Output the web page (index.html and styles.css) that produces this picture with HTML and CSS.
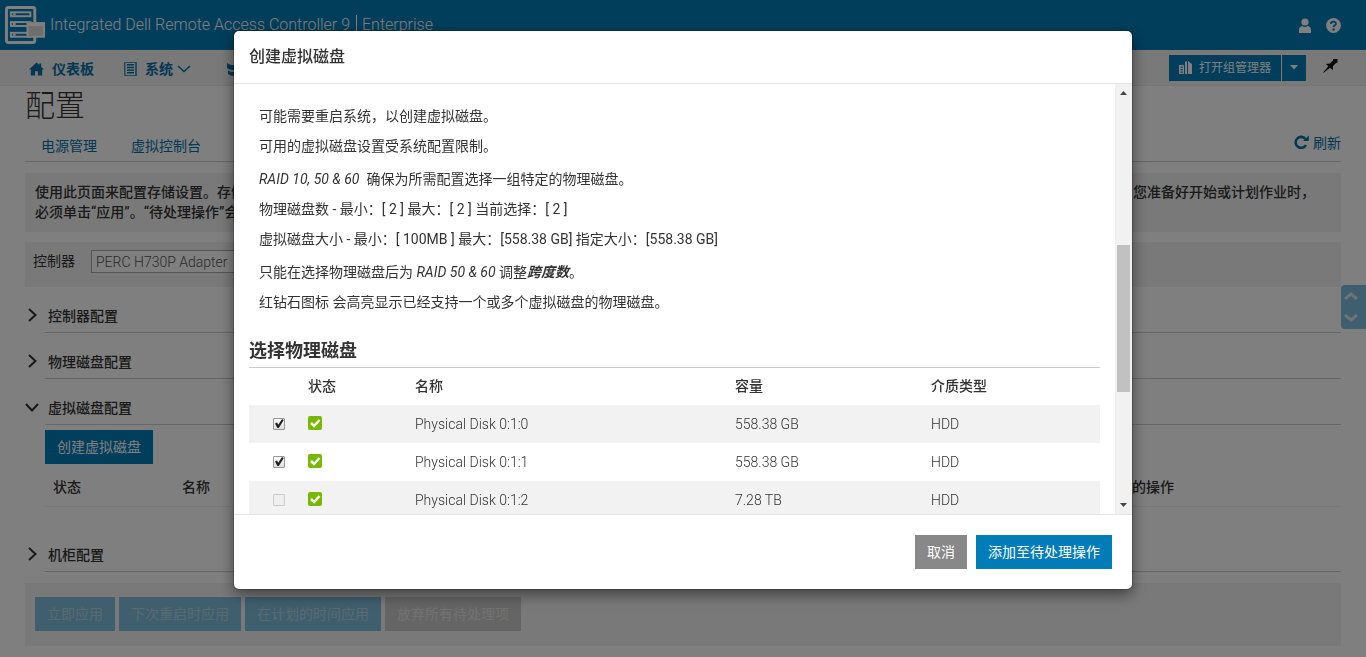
FILE: index.html
```html
<!DOCTYPE html>
<html lang="zh-CN">
<head>
<meta charset="utf-8">
<title>Integrated Dell Remote Access Controller 9</title>
<link rel="stylesheet" href="styles.css">
</head>
<body>
<header class="topbar">
  <svg class="logo" viewBox="0 0 42 40" aria-hidden="true">
    <rect x="1.500" y="2" width="29" height="36" rx="2" fill="none" stroke="#fff" stroke-width="3"/>
    <g fill="none" stroke="#fff" stroke-width="2">
      <rect x="6" y="7" width="20" height="4"/><rect x="6" y="17" width="20" height="4"/><rect x="6" y="28" width="20" height="4"/>
    </g>
    <g fill="#fff"><rect x="8" y="8" width="3" height="2"/><rect x="8" y="18" width="3" height="2"/><rect x="8" y="29" width="3" height="2"/></g>
    <rect x="23" y="18" width="17" height="14" fill="#dcdcdc" stroke="#fff" stroke-width="2"/>
    <path d="M23 18h17v3H23z" fill="#fff"/>
  </svg>
  <div class="brand"><span>Integrated Dell Remote Access Controller 9</span><span class="edition">Enterprise</span></div>
  <button class="icon-btn" aria-label="用户"><svg width="12" height="15" viewBox="0 0 12 15"><circle cx="6" cy="4" r="3.6"/><path d="M0 15v-3c0-3 2-4 3.500-4a4 4 0 0 0 5 0C10 8 12 9 12 12v3z"/></svg></button>
  <button class="icon-btn" aria-label="帮助"><svg width="15" height="15" viewBox="0 0 15 15"><circle cx="7.500" cy="7.500" r="7.400"/><path d="M5 6c0-3 5-3 5-.3 0 1.700-2.400 1.600-2.400 3.300" fill="none" stroke="#007db8" stroke-width="1.800"/><circle cx="7.600" cy="11.500" r="1.200" fill="#007db8"/></svg></button>
</header>
<nav class="nav">
  <a href="#" class="nav-item"><svg width="15" height="14" viewBox="0 0 16 14"><path d="M8 0 0 7.500h2V14h4.500V9.500h3V14H14V7.500h2l-3-2.800V1h-2v1.800z"/></svg>仪表板</a>
  <a href="#" class="nav-item nav-system"><svg width="13" height="14" viewBox="0 0 13 14"><path d="M0 0h13v14H0zM1.500 1v12H11V1z" fill-rule="evenodd" opacity=".7"/><path d="M3 2h7v1.500H3zM3 4.700h7v1.500H3zM3 7.400h7v1.500H3zM3 10.100h7v1.500H3z"/></svg>系统<svg class="caret" width="14" height="8" viewBox="0 0 14 8"><path d="m1 1 6 5.500L13 1" fill="none" stroke="#0071a8" stroke-width="1.500"/></svg></a>
  <a href="#" class="nav-item nav-storage" aria-label="存储"><svg width="14" height="14" viewBox="0 0 14 14"><path d="M0 1c4 3 10 3 14 0v5c-4 3-10 3-14 0zM1 8.500c4 2 8 2 12 0V12c-3 2.500-9 2.500-12 0z"/></svg></a>
  <div class="split">
    <button class="group-btn"><svg width="13" height="13" viewBox="0 0 13 13"><path d="M0 4h5v9H0zM1.500 5.500v1.300H3.800V5.500zm0 2.500v1.300H3.800V8zm0 2.500v1.300H3.800v-1.300zM6 1l2-1v13H6zM9 0l4 3v10H9z" fill-rule="evenodd"/></svg>打开组管理器</button>
    <button class="drop-btn" aria-label="更多"><svg width="8" height="5" viewBox="0 0 8 5"><path d="M0 0h8L4 4.500z"/></svg></button>
  </div>
  <button class="pin" aria-label="固定"><svg width="15" height="14" viewBox="0 0 15 14"><path d="M10 0h4.500v3.500L13 4l-3 3-.2 4L7 8.800 1 13.500 0 14l.5-1L5.300 7.200 3 5l4-.5 3-3z"/></svg></button>
</nav>
<main class="page">
  <h1>配置</h1>
  <div class="tabs">
    <a href="#">电源管理</a><a href="#">虚拟控制台</a>
    <a href="#" class="refresh"><svg width="15" height="14" viewBox="0 0 15 14"><path d="M11.500 4A5.500 5.500 0 1 0 12 10" fill="none" stroke="#0071a8" stroke-width="2.600"/><path d="M14.800.5V6H9z"/></svg>刷新</a>
  </div>
  <div class="notice">
    <p><span>使用此页面来配置存储设置。存储</span><span>当您准备好开始或计划作业时，</span></p>
    <p><span>必须单击“应用”。“待处理操作”会</span></p>
  </div>
  <div class="controller">
    <label for="ctl">控制器</label>
    <select id="ctl"><option>PERC H730P Adapter</option></select>
  </div>
  <section class="fold"><svg viewBox="-3 0 14 14"><path d="m1 1 6.500 6L1 13"/></svg><h2>控制器配置</h2></section>
  <section class="fold"><svg viewBox="-3 0 14 14"><path d="m1 1 6.500 6L1 13"/></svg><h2>物理磁盘配置</h2></section>
  <section class="fold"><svg viewBox="0 -3 14 14"><path d="m1 1 6 6.500L13 1"/></svg><h2>虚拟磁盘配置</h2></section>
  <div class="vdisk">
    <button class="btn">创建虚拟磁盘</button>
    <table>
      <thead><tr><th class="v-status">状态</th><th>名称</th><th class="v-action">可执行的操作</th></tr></thead>
    </table>
  </div>
  <section class="fold"><svg viewBox="-3 0 14 14"><path d="m1 1 6.500 6L1 13"/></svg><h2>机柜配置</h2></section>
  <div class="actions">
    <button class="btn" disabled>立即应用</button><button class="btn" disabled>下次重启时应用</button><button class="btn" disabled>在计划的时间应用</button><button class="btn gray" disabled>放弃所有待处理项</button>
  </div>
</main>
<div class="jump">
  <button aria-label="向上"><svg width="14" height="8" viewBox="0 0 14 8"><path d="m1 7 6-5 6 5"/></svg></button>
  <button aria-label="向下"><svg width="14" height="8" viewBox="0 0 14 8"><path d="m1 1 6 5 6-5"/></svg></button>
</div>

<div class="backdrop">
  <div class="modal" role="dialog" aria-modal="true" aria-labelledby="dlg">
    <h3 class="modal-head" id="dlg">创建虚拟磁盘</h3>
    <div class="modal-body">
      <div class="modal-content">
        <div class="info">
          <p>可能需要重启系统，以创建虚拟磁盘。</p>
          <p>可用的虚拟磁盘设置受系统配置限制。</p>
          <p class="group"><i>RAID 10, 50 &amp; 60</i>&nbsp; 确保为所需配置选择一组特定的物理磁盘。</p>
          <p>物理磁盘数 - 最小：[ 2 ] 最大：[ 2 ] 当前选择：[ 2 ]</p>
          <p>虚拟磁盘大小 - 最小：[ 100MB ] 最大：[558.38 GB] 指定大小：[558.38 GB]</p>
          <p class="group">只能在选择物理磁盘后为 <i>RAID 50 &amp; 60</i> 调整<b><i>跨度数</i></b>。</p>
          <p>红钻石图标 会高亮显示已经支持一个或多个虚拟磁盘的物理磁盘。</p>
        </div>
        <h4>选择物理磁盘</h4>
        <table class="disks">
          <colgroup><col class="c-check"><col class="c-status"><col class="c-name"><col class="c-size"><col></colgroup>
          <thead><tr><th></th><th>状态</th><th>名称</th><th>容量</th><th>介质类型</th></tr></thead>
          <tbody>
            <tr><td><input type="checkbox" checked aria-label="Physical Disk 0:1:0"></td><td><svg class="ok" viewBox="0 0 14 14"><rect width="14" height="14" rx="2"/><path d="m3 7 3 3 5.500-6"/></svg></td><td>Physical Disk 0:1:0</td><td>558.38 GB</td><td>HDD</td></tr>
            <tr><td><input type="checkbox" checked aria-label="Physical Disk 0:1:1"></td><td><svg class="ok" viewBox="0 0 14 14"><rect width="14" height="14" rx="2"/><path d="m3 7 3 3 5.500-6"/></svg></td><td>Physical Disk 0:1:1</td><td>558.38 GB</td><td>HDD</td></tr>
            <tr><td><input type="checkbox" disabled aria-label="Physical Disk 0:1:2"></td><td><svg class="ok" viewBox="0 0 14 14"><rect width="14" height="14" rx="2"/><path d="m3 7 3 3 5.500-6"/></svg></td><td>Physical Disk 0:1:2</td><td>7.28 TB</td><td>HDD</td></tr>
          </tbody>
        </table>
      </div>
      <div class="scrollbar" aria-hidden="true">
        <svg width="7" height="4" viewBox="0 0 7 4"><path d="M0 4h7L3.500 0z"/></svg>
        <div class="track"><div class="thumb"></div></div>
        <svg width="7" height="4" viewBox="0 0 7 4"><path d="M0 0h7L3.500 4z"/></svg>
      </div>
    </div>
    <div class="modal-foot">
      <button class="btn cancel">取消</button>
      <button class="btn">添加至待处理操作</button>
    </div>
  </div>
</div>
</body>
</html>
```

FILE: styles.css
```css
* { box-sizing: border-box; }
body {
  margin: 0;
  font: 300 14px/20px Roboto, "Noto Sans CJK SC", sans-serif;
  color: #333;
  background: #fff;
}
h1, h2, h3, h4, p { margin: 0; }
a { color: #0071a8; text-decoration: none; fill: #0071a8; }
button { font: inherit; border: 0; padding: 0; background: none; }
svg { flex: none; display: block; }

.topbar {
  display: flex;
  align-items: center;
  height: 50px;
  padding: 0 25px 0 5px;
  background: #007db8;
  color: #fff;
}
.logo { width: 41px; height: 40px; }
.brand { display: flex; flex: 1; margin-left: 4px; font-size: 16px; }
.edition { margin-left: 6px; padding-left: 5px; border-left: 1px solid #fff; }
.icon-btn { fill: #fff; margin-left: 15px; }

.nav {
  display: flex;
  align-items: center;
  height: 36px;
  padding: 0 28px 0 29px;
  background: #f2f2f2;
  border-bottom: 1px solid #eaeaea;
}
.nav-item { display: flex; align-items: center; gap: 8px; padding-top: 2px; font-weight: 700; }
.nav-system { margin-left: 30px; }
.nav-storage { margin-left: 36px; }
.caret { margin-left: -4px; }
.split { display: flex; gap: 1px; margin-left: auto; fill: #fff; }
.split button { display: flex; align-items: center; height: 26px; background: #007db8; color: #fff; }
.split .group-btn { gap: 7px; padding: 0 10px; font-size: 12px; font-weight: 400; }
.split .drop-btn { padding: 0 8px; }
.pin { margin: 0 0 4px 17px; fill: #111; }

.page { padding: 0 25px; }
h1 { font-size: 30px; line-height: 40px; font-weight: 300; }
.tabs {
  display: flex;
  gap: 34px;
  height: 36px;
  padding: 10px 0 0 16px;
  border-bottom: 1px solid #ccc;
  font-weight: 400;
}
.refresh { display: flex; gap: 4px; margin: -3px 0 0 auto; }
.refresh svg { margin-top: 2px; }
.notice, .controller, .actions { background: #f2f2f2; }
.notice { margin-top: 11px; padding: 9px 10px; height: 59px; font-weight: 500; }
.notice p { display: flex; justify-content: space-between; padding-right: 16px; }
.controller {
  display: flex;
  gap: 16px;
  height: 45px;
  margin-top: 10px;
  padding: 8px;
  font-weight: 400;
  line-height: 22px;
}
.controller select {
  width: 240px;
  height: 23px;
  padding: 0 4px;
  border: 1px solid #aaa;
  border-radius: 0;
  background: #fff;
  color: #555;
  font: 300 14px/20px Roboto, sans-serif;
  appearance: none;
}
.fold { display: flex; align-items: flex-end; height: 46px; }
.fold svg { width: 14px; height: 14px; margin-bottom: 11px; fill: none; stroke: #333; stroke-width: 2; }
.fold h2 {
  flex: 1;
  height: 34px;
  margin-left: 6px;
  padding: 0 3px;
  border-bottom: 1px solid #ccc;
  font-size: 14px;
  line-height: 34px;
  font-weight: 500;
}
.btn { height: 34px; padding: 0 12px; background: #007db8; color: #fff; font-weight: 400; }
.vdisk { height: 101px; padding: 5px 0 0 20px; }
.vdisk table { width: 100%; margin-top: 5px; border-collapse: collapse; table-layout: fixed; }
.vdisk th { height: 37px; padding: 0 8px; border-bottom: 1px solid #f0f0f0; font-weight: 500; text-align: left; }
.v-status { width: 129px; }
.v-action { width: 259px; }
.actions { display: flex; gap: 4px; height: 63px; margin-top: 11px; padding: 14px 10px; }
.btn:disabled { background: #80bedc; color: #b4d4e4; }
.btn.gray:disabled { background: #cacaca; color: #e4e4e4; }

.jump {
  position: fixed;
  top: 285px;
  right: 0;
  display: flex;
  flex-direction: column;
  justify-content: space-around;
  width: 25px;
  height: 44px;
  padding: 0 3px;
  border-radius: 4px 0 0 4px;
  background: #80bedc;
}
.jump svg { fill: none; stroke: #d8e8f0; stroke-width: 3; }

.backdrop {
  position: fixed;
  inset: 0;
  padding-top: 31px;
  background: rgba(0, 0, 0, .5);
}
.modal {
  width: 898px;
  max-width: 100%;
  margin: 0 auto;
  border-radius: 5px;
  background: #fff;
  box-shadow: 0 0 0 1px rgba(0, 0, 0, .2), 0 5px 15px rgba(0, 0, 0, .5);
}
.modal-head {
  height: 53px;
  padding: 16px 15px;
  border-bottom: 1px solid #e5e5e5;
  font-size: 16px;
  font-weight: 500;
}
.modal-body { display: flex; height: 430px; overflow: hidden; }
.modal-content { flex: 1; padding: 22px 15px 0; }
.info { padding-left: 10px; }
.info p { margin-bottom: 10px; font-weight: 400; }
.info .group { margin-top: 13px; }
.info b { font-weight: 700; }
.modal h4 { margin-top: 24px; font-size: 18px; line-height: 30px; font-weight: 700; padding-bottom: 1px; }
.disks { width: 100%; border-collapse: collapse; table-layout: fixed; border-top: 1px solid #ccc; }
.disks th { height: 37px; padding: 0; font-weight: 500; text-align: left; }
.disks td { height: 38px; padding: 0; }
.disks tbody tr:nth-child(odd) { background: #f2f2f2; }
.c-check { width: 59px; }
.c-status { width: 107px; }
.c-name { width: 320px; }
.c-size { width: 196px; }
.disks td:first-child { padding-left: 24px; }
.disks input {
  display: block;
  width: 12px;
  height: 12px;
  margin: 0;
  border: 1px solid #999;
  border-radius: 1px;
  background: linear-gradient(#fff, #ddd);
  appearance: none;
}
.disks input:checked::after {
  content: "";
  display: block;
  height: 10px;
  background: #222;
  clip-path: polygon(10% 50%, 30% 40%, 43% 62%, 80% 5%, 98% 15%, 48% 95%, 34% 95%);
}
.disks input:disabled { border-color: #ccc; background: #eee; }
.ok { width: 14px; height: 14px; margin-bottom: 2px; fill: #76b900; }
.ok path { fill: none; stroke: #fff; stroke-width: 2.5; }
.scrollbar {
  display: flex;
  flex-direction: column;
  align-items: center;
  width: 17px;
  padding: 7px 0;
  background: #f1f1f1;
  fill: #444;
}
.track { flex: 1; padding-top: 150px; }
.thumb { width: 13px; height: 147px; background: #c1c1c1; }
.modal-foot {
  display: flex;
  justify-content: flex-end;
  gap: 9px;
  padding: 20px;
  border-top: 1px solid #e5e5e5;
}
.cancel { background: #888; }
```
